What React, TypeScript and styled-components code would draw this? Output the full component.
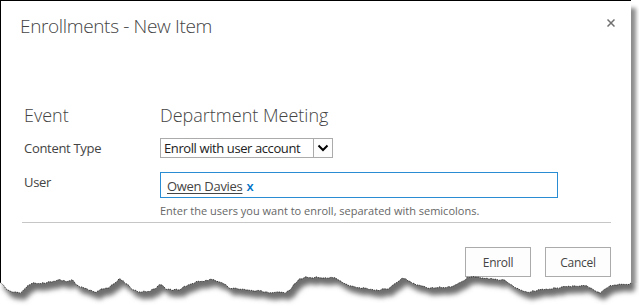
import React from "react";
import styled, { createGlobalStyle } from "styled-components";

const GlobalStyle = createGlobalStyle`
  body {
    margin: 0;
    background: #fff;
    font-family: "Open Sans", "Liberation Sans", sans-serif;
  }
`;

// rough outline of the torn bottom edge, in page coordinates
const edgeKeys: [number, number][] = [
  [0, 283], [4, 286], [7, 290], [11, 291], [15, 292], [20, 293], [24, 290], [27, 287],
  [30, 284], [35, 283], [45, 283], [50, 282], [55, 281], [60, 280], [64, 281], [67, 282],
  [72, 280], [75, 283], [78, 286], [83, 288], [87, 289], [92, 291], [97, 292], [100, 290],
  [107, 288], [110, 287], [115, 283], [118, 280], [120, 279], [123, 281], [125, 283],
  [129, 286], [132, 289], [136, 291], [140, 292], [150, 291], [154, 289], [157, 287],
  [160, 284], [166, 289], [172, 290], [180, 289], [188, 285], [196, 282], [204, 281],
  [212, 279], [218, 281], [224, 284], [230, 288], [240, 289], [250, 290], [261, 291],
  [270, 293], [278, 292], [285, 293], [290, 290], [294, 284], [300, 279], [306, 277],
  [312, 278], [318, 277], [325, 278], [335, 277], [341, 281], [347, 285], [355, 287],
  [367, 289], [378, 290], [388, 289], [395, 284], [402, 278], [407, 280], [412, 283],
  [418, 285], [424, 287], [432, 288], [441, 287], [450, 287], [455, 285], [460, 283],
  [464, 280], [467, 278], [473, 276], [483, 278], [493, 279], [503, 280], [508, 282],
  [512, 285], [516, 288], [520, 290], [527, 292], [540, 290], [557, 288], [573, 286],
  [587, 286], [593, 289], [600, 293], [604, 290], [610, 286], [613, 285], [627, 285],
  [631, 283],
];

const EDGE_TOP = 270;

function buildEdge(): [number, number][] {
  const pts: [number, number][] = [];
  for (let i = 0; i < edgeKeys.length - 1; i++) {
    const [x0, y0] = edgeKeys[i];
    const [x1, y1] = edgeKeys[i + 1];
    for (let x = x0; x < x1; x += 2) {
      const t = (x - x0) / (x1 - x0);
      const jitter = Math.sin(x * 12.9898) * 43758.5453;
      const j = (jitter - Math.floor(jitter) - 0.5) * 1.6;
      pts.push([x, y0 + (y1 - y0) * t + j - EDGE_TOP]);
    }
  }
  const last = edgeKeys[edgeKeys.length - 1];
  pts.push([last[0], last[1] - EDGE_TOP]);
  return pts;
}

function TornEdge() {
  const pts = buildEdge();
  const line = pts.map(([x, y]) => `${x},${y.toFixed(1)}`).join(" ");
  const endY = pts[pts.length - 1][1];
  const below = `M0,36 L${line.split(" ").join(" L")} L639,${endY} L639,36 Z`;
  const above = `M0,-40 L${line.split(" ").join(" L")} L631,-40 Z`;
  return (
    <EdgeSvg width="639" height="36" viewBox="0 0 639 36">
      <defs>
        <filter id="tornBlur" x="-10%" y="-50%" width="120%" height="200%">
          <feGaussianBlur stdDeviation="2.4" />
        </filter>
        <clipPath id="belowEdge">
          <path d={below} />
        </clipPath>
      </defs>
      <path d={below} fill="#fff" />
      <g clipPath="url(#belowEdge)">
        <path d={above} fill="#6e6e6e" transform="translate(4 7)" filter="url(#tornBlur)" />
      </g>
      <polyline points={line} fill="none" stroke="#222" strokeWidth="0.8" strokeDasharray="1.4 0.9" />
    </EdgeSvg>
  );
}

function CloseIcon() {
  return (
    <svg width="8" height="8" viewBox="0 0 8 8">
      <path d="M0.5 0.5 L7.5 7.5 M7.5 0.5 L0.5 7.5" stroke="#707070" strokeWidth="1.5" />
    </svg>
  );
}

function ChevronDown() {
  return (
    <svg width="12" height="8" viewBox="0 0 12 8">
      <polyline points="1.5,1.5 6,6 10.5,1.5" fill="none" stroke="#000" strokeWidth="2" />
    </svg>
  );
}

export default function App() {
  return (
    <>
      <GlobalStyle />
      <Frame>
        <Dialog>
          <Header>
            <Title>Enrollments - New Item</Title>
            <CloseButton aria-label="Close">
              <CloseIcon />
            </CloseButton>
          </Header>

          <Form>
            <FieldRow $top={64}>
              <Label $large>Event</Label>
              <Value>Department Meeting</Value>
            </FieldRow>
            <FieldRow $top={11}>
              <Label>Content Type</Label>
              <Select>
                <SelectText>Enroll with user account</SelectText>
                <ArrowBox>
                  <ChevronDown />
                </ArrowBox>
              </Select>
            </FieldRow>
            <FieldRow $top={14}>
              <Label>User</Label>
              <div>
                <PeoplePicker>
                  <Person>Owen Davies</Person>
                  <RemovePerson>x</RemovePerson>
                </PeoplePicker>
                <Hint>Enter the users you want to enroll, separated with semicolons.</Hint>
              </div>
            </FieldRow>
          </Form>

          <Divider />

          <Actions>
            <Button>Enroll</Button>
            <Button>Cancel</Button>
          </Actions>
        </Dialog>
        <TornEdge />
      </Frame>
    </>
  );
}

const Frame = styled.div`
  position: relative;
  width: 639px;
  height: 306px;
  overflow: hidden;
  background: #fff;
`;

const Dialog = styled.div`
  box-sizing: border-box;
  width: 631px;
  height: 306px;
  display: flex;
  flex-direction: column;
  background: #fff;
  border-top: 1px solid #000;
  border-left: 1px solid #000;
  box-shadow: 5px 8px 4px rgba(0, 0, 0, 0.45);
`;

const EdgeSvg = styled.svg`
  position: absolute;
  left: 0;
  top: ${EDGE_TOP}px;
  display: block;
`;

const Header = styled.div`
  display: flex;
  justify-content: space-between;
  align-items: flex-start;
  padding: 12px 14px 0 19px;
`;

const Title = styled.h1`
  margin: 0;
  font-size: 19px;
  font-weight: 300;
  line-height: 26px;
  letter-spacing: -0.35px;
  color: #444;
`;

const CloseButton = styled.button`
  width: 12px;
  height: 12px;
  margin-top: 4px;
  padding: 0;
  border: 0;
  background: transparent;
  display: flex;
  align-items: center;
  justify-content: center;
`;

const Form = styled.div`
  display: flex;
  flex-direction: column;
  padding-left: 23px;
`;

const FieldRow = styled.div<{ $top: number }>`
  display: flex;
  align-items: flex-start;
  margin-top: ${(p) => p.$top}px;
`;

const Label = styled.div<{ $large?: boolean }>`
  width: 136px;
  flex: none;
  font-size: ${(p) => (p.$large ? "18px" : "13px")};
  line-height: ${(p) => (p.$large ? "24px" : "20px")};
  letter-spacing: ${(p) => (p.$large ? "0" : "-0.3px")};
  font-weight: ${(p) => (p.$large ? 300 : 400)};
  color: #444;
`;

const Value = styled.div`
  font-size: 18px;
  line-height: 24px;
  font-weight: 300;
  color: #444;
`;

const Select = styled.div`
  box-sizing: border-box;
  width: 173px;
  height: 20px;
  display: flex;
  align-items: stretch;
  border: 1px solid #ababab;
  background: #fff;
`;

const SelectText = styled.span`
  flex: 1;
  padding: 1px 0 0 3px;
  font-size: 13px;
  line-height: 17px;
  letter-spacing: -0.4px;
  color: #222;
  white-space: nowrap;
`;

const ArrowBox = styled.span`
  width: 18px;
  display: flex;
  align-items: center;
  justify-content: center;
  border-left: 1px solid #ababab;
  background: #fdfdfd;
`;

const PeoplePicker = styled.div`
  box-sizing: border-box;
  width: 398px;
  height: 26px;
  display: flex;
  align-items: center;
  gap: 4px;
  padding: 2px 0 0 6px;
  border: 1px solid #2a8dd4;
  font-size: 13px;
  letter-spacing: -0.3px;
`;

const Person = styled.span`
  color: #444;
  text-decoration: underline;
  text-underline-offset: 2px;
`;

const RemovePerson = styled.span`
  color: #0072c6;
  font-weight: 600;
`;

const Hint = styled.div`
  margin-top: 5px;
  font-size: 11px;
  line-height: 15px;
  color: #666;
`;

const Divider = styled.hr`
  margin: 4px 20px 0 21px;
  border: 0;
  border-top: 1px solid #c6c6c6;
`;

const Actions = styled.div`
  display: flex;
  justify-content: flex-end;
  gap: 14px;
  padding-right: 20px;
  margin-top: 24px;
`;

const Button = styled.button`
  box-sizing: border-box;
  width: 66px;
  height: 30px;
  padding: 0;
  border: 1px solid #ababab;
  background: #fdfdfd;
  font-family: "Open Sans", "Liberation Sans", sans-serif;
  font-size: 12px;
  letter-spacing: -0.3px;
  color: #444;
`;
